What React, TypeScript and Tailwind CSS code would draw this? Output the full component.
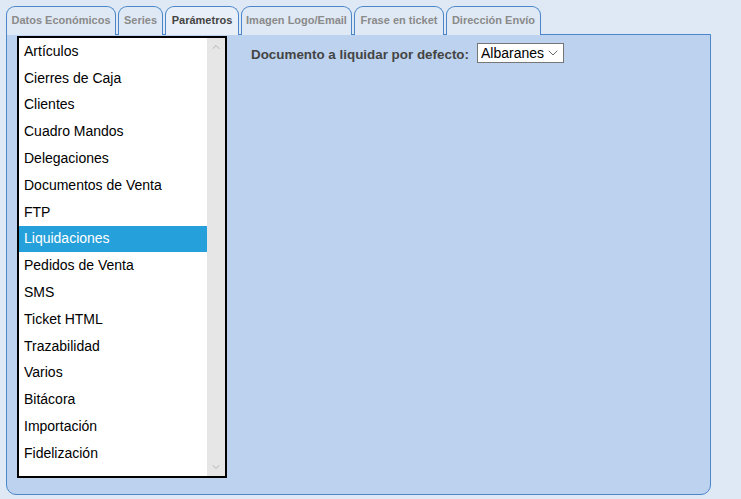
import { ChevronDown, ChevronUp } from "lucide-react";

const tabs = [
  { label: "Datos Económicos", w: "w-[110px]" },
  { label: "Series", w: "w-[45px]" },
  { label: "Parámetros", w: "w-[74px]", active: true },
  { label: "Imagen Logo/Email", w: "w-[111px]" },
  { label: "Frase en ticket", w: "w-[90px]" },
  { label: "Dirección Envío", w: "w-[95px]" },
];

const items = [
  "Artículos",
  "Cierres de Caja",
  "Clientes",
  "Cuadro Mandos",
  "Delegaciones",
  "Documentos de Venta",
  "FTP",
  "Liquidaciones",
  "Pedidos de Venta",
  "SMS",
  "Ticket HTML",
  "Trazabilidad",
  "Varios",
  "Bitácora",
  "Importación",
  "Fidelización",
];

export default function App() {
  return (
    <div className="w-[741px] h-[499px] bg-[#dfe9f5] pt-[6px] pl-[6px] font-['Liberation_Sans',Arial,sans-serif] overflow-hidden">
      <div className="flex gap-[2px] h-[28px]">
        {tabs.map((t) => (
          <div
            key={t.label}
            className={`${t.w} h-[29px] border border-b-0 border-[#4a86c8] rounded-t-[9px] flex justify-center pt-[5px] text-[11px] font-bold ${
              t.active ? "bg-[#e8eff8] text-[#444]" : "bg-[#dfe9f5] text-[#8a8a8a]"
            }`}
          >
            {t.label}
          </div>
        ))}
      </div>
      <div className="w-[705px] h-[461px] bg-[#bcd2ee] border border-[#4a86c8] rounded-b-[10px] flex pl-[10px] pt-[1px]">
        <div className="w-[210px] h-[442px] border-2 border-black bg-white flex">
          <div className="flex-1 flex flex-col">
            {items.map((it) => (
              <div
                key={it}
                className={`h-[26.8px] flex items-center pl-[5px] text-[14px] ${
                  it === "Liquidaciones" ? "bg-[#26a0da] text-white" : "text-black"
                }`}
              >
                {it}
              </div>
            ))}
          </div>
          <div className="w-[18px] bg-[#e6e6e6] flex flex-col justify-between items-center py-[3px] text-[#a0a0a0]">
            <ChevronUp size={12} strokeWidth={1.5} />
            <ChevronDown size={12} strokeWidth={1.5} />
          </div>
        </div>
        <div className="flex items-start pl-[24px] pt-[7px] gap-[8px]">
          <span className="text-[13.4px] font-bold text-[#444] mt-[2px]">
            Documento a liquidar por defecto:
          </span>
          <div className="w-[87px] h-[20px] border border-[#767676] bg-white flex items-center justify-between pl-[3px] pr-[2px] text-[14px] text-black">
            <span>Albaranes</span>
            <ChevronDown size={16} strokeWidth={1.3} className="text-[#555]" />
          </div>
        </div>
      </div>
    </div>
  );
}
